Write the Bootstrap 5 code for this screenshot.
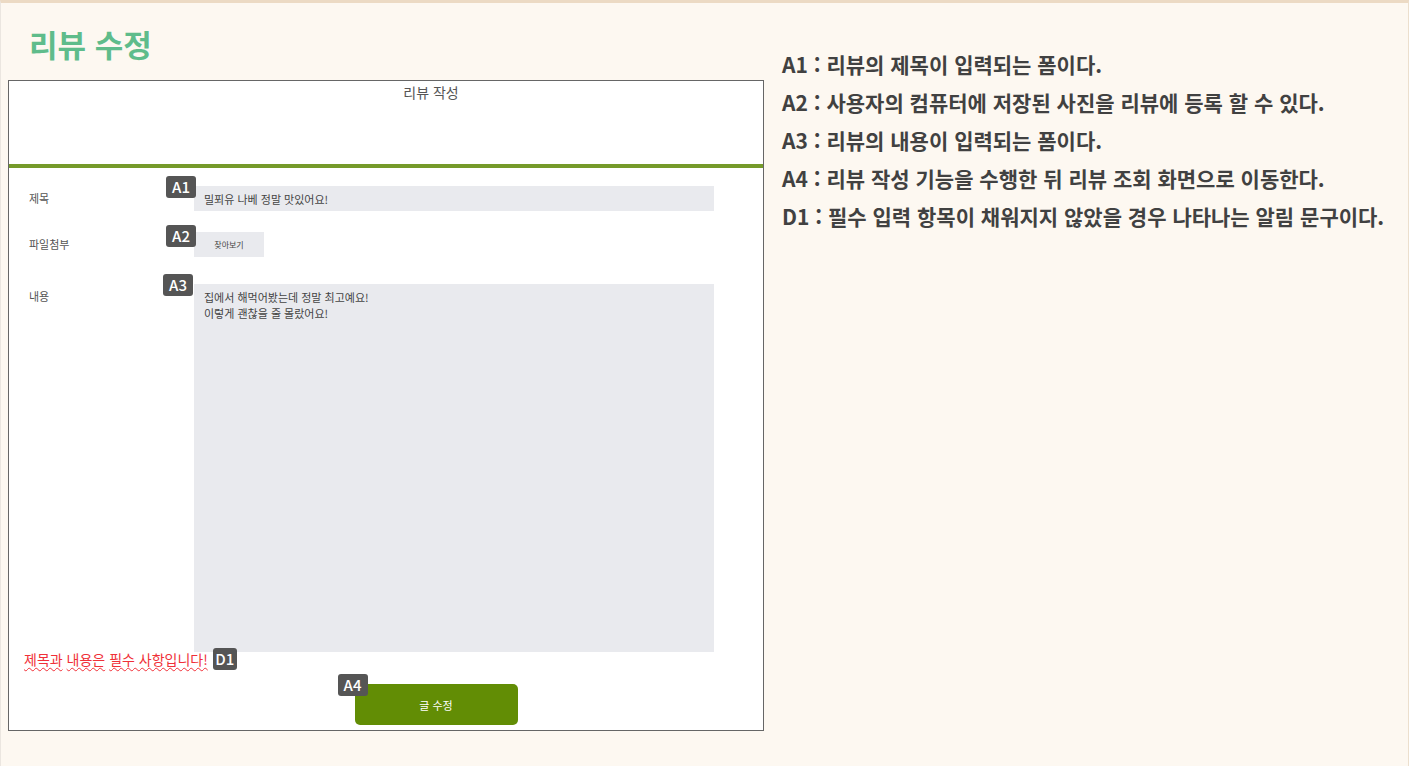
<!DOCTYPE html>
<html lang="ko">
<head>
<meta charset="utf-8">
<meta name="viewport" content="width=device-width, initial-scale=1">
<title>리뷰 수정</title>
<link href="https://cdn.jsdelivr.net/npm/bootstrap@5.3.0/dist/css/bootstrap.min.css" rel="stylesheet">
<style>
  body {
    font-family: "Noto Sans CJK KR", sans-serif;
    background: #fdf8f1;
    color: #414141;
  }
  .sheet {
    min-height: 100vh;
    padding: 21px 0 32px 7px;
    border: solid #ebe6e0;
    border-width: 3px 1px 0 1px;
    border-top-color: #ecdac4;
    border-right-color: #ecdfcd;
  }
  .sheet-grid {
    display: grid;
    grid-template-columns: minmax(0, 6fr) minmax(0, 5fr);
    column-gap: 14px;
  }
  .sheet-title { font-size: 31px; line-height: 40px; font-weight: 700; color: #5fbc8b; padding-left: 21px; margin-bottom: 16px; }
  .screen { background: #fff; border: 1px solid #666; padding-bottom: 5px; }
  .screen-head { height: 87px; border-bottom: 4px solid #759a2a; padding-left: 90px; color: #555; }
  .screen-head h2 { font-size: 14px; line-height: 22px; font-weight: 400; }
  .review-form { font-size: 11px; line-height: 16px; color: #555; }
  .fields { padding: 18px 49px 0 20px; }
  .field-name { width: 165px; flex: none; padding-top: 4px; }
  .field-box {
    display: block; width: 100%; height: 25px; border: 0; border-radius: 0; resize: none;
    background: #e9eaee; color: #444; font-size: 11px; line-height: 16px;
    padding: 4px 10px;
  }
  .field-box.tall { height: 368px; padding-top: 5px; }
  .row-title { margin-bottom: 21px; }
  .row-file { margin-bottom: 27px; }
  .btn-file { width: 70px; height: 25px; border: 0; background: #e9eaee; color: #444; font-size: 8px; line-height: 16px; padding: 0; }
  .tag {
    display: inline-block; background: #555; color: #fff; border-radius: 3px;
    font-size: 15px; line-height: 22px; height: 22px; width: 30px; text-align: center; font-weight: 500;
  }
  .tag-over { position: absolute; left: -28px; top: -10px; z-index: 1; }
  .tag-file { top: -7px; }
  .tag-content { left: -31px; }
  .tag-submit { left: -17px; }
  .tag-alert { width: 24px; }
  .alert-line { position: relative; padding-left: 15px; margin-top: -4px; gap: 5px; font-size: 14px; line-height: 22px; color: #f03038; }
  .wavy { text-decoration: underline wavy #f03038 1px; text-underline-offset: 2px; }
  .submit-row { padding-left: 100px; margin-top: 14px; }
  .btn-submit { width: 163px; height: 41px; border: 0; border-radius: 5px; background: #628d05; color: #fff; font-size: 11px; line-height: 16px; }
  .notes { padding-top: 24px; }
  .notes li { font-size: 21px; line-height: 32px; font-weight: 700; margin-bottom: 6px; }
  @media (max-width: 991px) { .sheet-grid { grid-template-columns: minmax(0, 1fr); } }
</style>
</head>
<body>
<div class="sheet">
  <div class="sheet-grid">
    <main>
      <h1 class="sheet-title">리뷰 수정</h1>
      <section class="screen">
        <header class="screen-head text-center"><h2 class="m-0">리뷰 작성</h2></header>
        <form class="review-form">
          <div class="fields">
            <div class="d-flex row-title">
              <label class="field-name" for="title">제목</label>
              <div class="position-relative flex-grow-1">
                <span class="tag tag-over">A1</span>
                <input class="field-box" id="title" type="text" value="밀푀유 나베 정말 맛있어요!">
              </div>
            </div>
            <div class="d-flex row-file">
              <label class="field-name" for="file">파일첨부</label>
              <div class="position-relative d-flex">
                <span class="tag tag-over tag-file">A2</span>
                <button class="btn-file" id="file" type="button">찾아보기</button>
              </div>
            </div>
            <div class="d-flex">
              <label class="field-name" for="content">내용</label>
              <div class="position-relative flex-grow-1">
                <span class="tag tag-over tag-content">A3</span>
                <textarea class="field-box tall" id="content">집에서 해먹어봤는데 정말 최고예요!
이렇게 괜찮을 줄 몰랐어요!</textarea>
              </div>
            </div>
          </div>
          <div class="alert-line d-flex align-items-center">
            <span><span class="wavy">제목과</span> <span class="wavy">내용은</span> <span class="wavy">필수 사항입니다!</span></span>
            <span class="tag tag-alert">D1</span>
          </div>
          <div class="submit-row d-flex justify-content-center">
            <div class="position-relative">
              <span class="tag tag-over tag-submit">A4</span>
              <button class="btn-submit d-block" type="button">글 수정</button>
            </div>
          </div>
        </form>
      </section>
    </main>
    <aside class="notes ps-1">
      <ul class="list-unstyled m-0">
        <li>A1 : 리뷰의 제목이 입력되는 폼이다.</li>
        <li>A2 : 사용자의 컴퓨터에 저장된 사진을 리뷰에 등록 할 수 있다.</li>
        <li>A3 : 리뷰의 내용이 입력되는 폼이다.</li>
        <li>A4 : 리뷰 작성 기능을 수행한 뒤 리뷰 조회 화면으로 이동한다.</li>
        <li>D1 : 필수 입력 항목이 채워지지 않았을 경우 나타나는 알림 문구이다.</li>
      </ul>
    </aside>
  </div>
</div>
<script src="https://cdn.jsdelivr.net/npm/bootstrap@5.3.0/dist/js/bootstrap.bundle.min.js"></script>
</body>
</html>
